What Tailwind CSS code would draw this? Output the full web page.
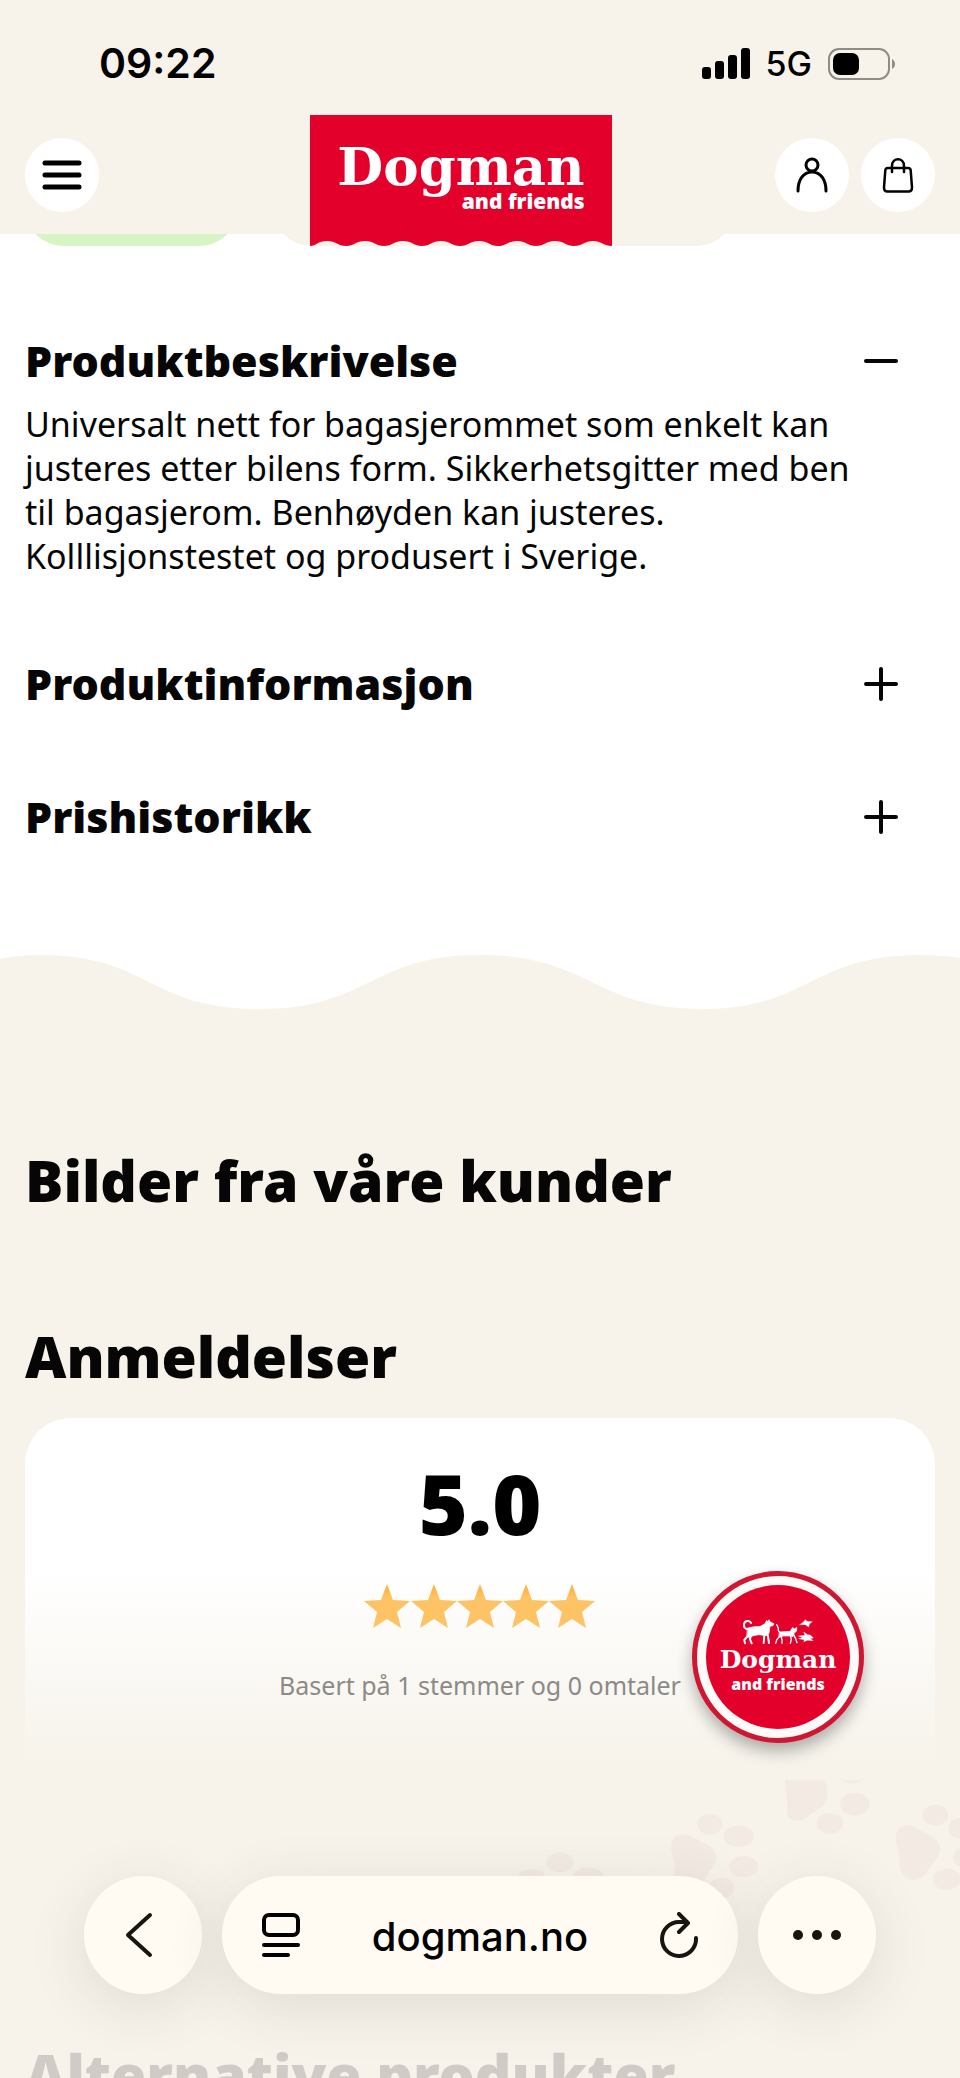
<!DOCTYPE html>
<html lang="no">
<head>
    <meta charset="UTF-8">
    <meta name="viewport" content="width=device-width, initial-scale=1.0">
    <title>Dogman and friends</title>
    <script src="https://cdn.jsdelivr.net/npm/@tailwindcss/browser@4"></script>
</head>
<body class="bg-[#f7f3eb] text-[#060606] font-['Noto_Sans',sans-serif]">
    <div class="relative h-screen overflow-hidden">

        <!-- Header -->
        <header class="relative z-10 h-[234px] bg-[#f7f3eb]">
            <div class="flex items-center justify-between h-[115px] pl-[99px] pr-16 pt-3 font-['Inter',sans-serif] text-black">
                <span class="text-[41px] leading-none font-semibold">09:22</span>
                <div class="flex items-center gap-4">
                    <svg class="w-12 h-8" viewBox="0 0 48 32" aria-hidden="true">
                        <rect x="0" y="19" width="9" height="12" rx="3"/>
                        <rect x="13" y="13" width="9" height="18" rx="3"/>
                        <rect x="26" y="7" width="9" height="24" rx="3"/>
                        <rect x="39" y="0" width="9" height="31" rx="3"/>
                    </svg>
                    <span class="text-[34px] leading-none font-medium">5G</span>
                    <svg class="w-[68px] h-8" viewBox="0 0 68 32" aria-hidden="true">
                        <rect x="1" y="1" width="60" height="30" rx="10" fill="none" stroke="#8f8c88" stroke-width="2"/>
                        <rect x="5" y="5" width="26" height="22" rx="7"/>
                        <path d="M64 11c4 2 4 8 0 10z" fill="#8f8c88"/>
                    </svg>
                </div>
            </div>
            <nav class="flex items-start justify-between px-[25px]">
                <div class="w-[122px] pt-[23px]">
                    <button type="button" aria-label="Meny" class="flex items-center justify-center size-[74px] rounded-full bg-white">
                        <svg class="w-10 h-8" viewBox="0 0 40 32" fill="none" stroke="#000" stroke-width="5" stroke-linecap="round">
                            <path d="M3 4h34M3 16h34M3 28h34"/>
                        </svg>
                    </button>
                </div>
                <a href="#" class="relative flex flex-col items-center w-[302px] h-[131px] text-white">
                    <svg class="absolute inset-0 size-full" viewBox="0 0 302 131" aria-hidden="true">
                        <path d="M0 0H302V131C294 131 291 126 283 126S272 131 264 131S254 126 245 126S234 131 226 131S216 126 207 126S196 131 188 131S178 126 169 126S158 131 150 131S140 126 131 126S120 131 112 131S102 126 93 126S82 131 74 131S64 126 55 126S44 131 36 131S26 126 17 126S6 131 0 131Z" fill="#e3002b"/>
                    </svg>
                    <span class="relative flex flex-col items-end pt-[27px]">
                        <span class="text-[53px] leading-[48px] font-bold font-['DejaVu_Serif',serif]">Dogman</span>
                        <span class="text-[21px] leading-[22px] font-black">and friends</span>
                    </span>
                </a>
                <div class="flex gap-3 pt-[23px]">
                    <button type="button" aria-label="Min side" class="flex items-center justify-center size-[74px] rounded-full bg-white">
                        <svg class="w-8 h-9" viewBox="0 0 32 36" fill="none" stroke="#000" stroke-width="3" stroke-linecap="round">
                            <circle cx="16" cy="8" r="6"/>
                            <path d="M2 34C2 23 7 15 16 15S30 23 30 34"/>
                        </svg>
                    </button>
                    <button type="button" aria-label="Handlekurv" class="flex items-center justify-center size-[74px] rounded-full bg-white">
                        <svg class="w-8 h-9" viewBox="0 0 32 36" fill="none" stroke="#000" stroke-width="2.500" stroke-linecap="round" stroke-linejoin="round">
                            <path d="M6 11H26Q28.500 11 28.700 13.500L30 30.500Q30 34.500 26.500 34.500H5.500Q2 34.500 2 30.500L3.300 13.500Q3.500 11 6 11Z"/>
                            <path d="M10 15V9C10 0 22 0 22 9V15"/>
                        </svg>
                    </button>
                </div>
            </nav>
        </header>

        <main>
            <!-- Accordion -->
            <section class="bg-white pb-[108px]">
                <div class="flex gap-[35px] px-[25px]">
                    <div class="-mt-16 w-[213px] h-[76px] rounded-full bg-[#d7f5c4]"></div>
                    <div class="-mt-16 w-[462px] h-[76px] rounded-full bg-[#f7f3eb]"></div>
                </div>
                <div class="flex flex-col gap-[73px] px-[25px] pt-[85px]">
                    <details open>
                        <summary class="flex items-center justify-between list-none h-[60px] pr-9">
                            <h2 class="text-[43px] leading-[60px] font-black">Produktbeskrivelse</h2>
                            <svg class="size-9" viewBox="0 0 36 36" fill="none" stroke="#060606" stroke-width="4" stroke-linecap="round"><path d="M3 18h30"/></svg>
                        </summary>
                        <p class="pt-[11px] pb-[3px] pr-20 text-[34px] leading-[44px]">Universalt nett for bagasjerommet som enkelt kan justeres etter bilens form. Sikkerhetsgitter med ben til bagasjerom. Benhøyden kan justeres. Kolllisjonstestet og produsert i Sverige.</p>
                    </details>
                    <details>
                        <summary class="flex items-center justify-between list-none h-[60px] pr-9">
                            <h2 class="text-[43px] leading-[60px] font-black">Produktinformasjon</h2>
                            <svg class="size-9" viewBox="0 0 36 36" fill="none" stroke="#060606" stroke-width="4" stroke-linecap="round"><path d="M3 18h30M18 3v30"/></svg>
                        </summary>
                    </details>
                    <details>
                        <summary class="flex items-center justify-between list-none h-[60px] pr-9">
                            <h2 class="text-[43px] leading-[60px] font-black">Prishistorikk</h2>
                            <svg class="size-9" viewBox="0 0 36 36" fill="none" stroke="#060606" stroke-width="4" stroke-linecap="round"><path d="M3 18h30M18 3v30"/></svg>
                        </summary>
                    </details>
                </div>
            </section>

            <!-- Wave divider -->
            <svg class="block w-full h-[54px]" viewBox="0 0 960 54" preserveAspectRatio="none" aria-hidden="true">
                <path d="M0 0H960V3Q942 0 921 0C810 0 810 54 702 54S590 0 480 0S370 54 259 54S150 0 39 0Q18 0 0 4Z" fill="#fff"/>
            </svg>

            <section class="px-[25px] pt-[131px]">
                <h2 class="text-[57px] leading-[80px] font-black">Bilder fra våre kunder</h2>
                <h2 class="pt-24 text-[57px] leading-[80px] font-black">Anmeldelser</h2>

                <!-- Rating card -->
                <div class="flex flex-col items-center h-[560px] mt-[22px] rounded-[46px] bg-linear-to-b from-white from-[150px] to-[#f7f3eb] to-[345px]">
                    <p class="pt-[30px] text-[84px] leading-[110px] font-black text-black">5.0</p>
                    <svg class="mt-[26px] w-[232px] h-11" viewBox="0 0 232 44" role="img" aria-label="5 av 5 stjerner">
                        <defs>
                            <linearGradient id="gold" x1="0" y1="0" x2="0" y2="1">
                                <stop offset=".15" stop-color="#fdb749"/>
                                <stop offset=".3" stop-color="#fdc364"/>
                            </linearGradient>
                            <path id="star" d="M23 0L29 16L46 17L33 28L37 44L23 35L9 44L13 28L0 17L17 16Z" fill="url(#gold)"/>
                        </defs>
                        <use href="#star"/>
                        <use href="#star" x="47"/>
                        <use href="#star" x="93"/>
                        <use href="#star" x="139"/>
                        <use href="#star" x="185"/>
                    </svg>
                    <p class="pt-10 text-[25px] leading-[34px] text-[#8c8a88]">Basert på 1 stemmer og 0 omtaler</p>
                </div>
                <h2 class="pt-[56px] text-[57px] leading-[80px] font-black text-[#d0cbc7]">Alternative produkter</h2>
            </section>
        </main>

        <!-- Paw prints -->
        <svg class="absolute bottom-[152px] right-0 w-[480px] h-[150px]" viewBox="0 108 1440 450" fill="#f3eae4" aria-hidden="true">
            <path d="M914 121H1035C1055 180 1035 195 1005 215C980 230 970 243 955 243C925 243 918 225 921 200C923 170 918 145 914 121Z"/>
            <ellipse cx="1050" cy="250" rx="40" ry="31"/>
            <ellipse cx="1124" cy="193" rx="44" ry="34"/>
            <path d="M1085 121Q1115 143 1147 121Z"/>
            <path d="M574 310C580 280 615 275 640 293C670 310 700 315 710 350C710 375 690 385 680 410C660 445 640 450 610 450C575 445 582 410 584 380C585 350 570 340 574 310Z"/>
            <ellipse cx="690" cy="253" rx="38" ry="31"/>
            <ellipse cx="776" cy="289" rx="46" ry="32"/>
            <ellipse cx="791" cy="380" rx="44" ry="32"/>
            <ellipse cx="725" cy="444" rx="38" ry="31"/>
            <path d="M1248 285C1255 250 1290 248 1315 268C1345 285 1382 295 1380 330C1378 355 1358 365 1345 390C1325 425 1285 430 1266 400C1255 380 1262 360 1256 335C1252 315 1245 305 1248 285Z"/>
            <ellipse cx="1366" cy="225" rx="39" ry="31"/>
            <ellipse cx="1446" cy="265" rx="42" ry="32"/>
            <ellipse cx="1460" cy="353" rx="40" ry="32"/>
            <ellipse cx="1400" cy="418" rx="42" ry="32"/>
            <ellipse cx="240" cy="367" rx="40" ry="30"/>
            <ellipse cx="155" cy="412" rx="40" ry="26"/>
            <ellipse cx="325" cy="410" rx="44" ry="28"/>
        </svg>

        <!-- Floating badge -->
        <button type="button" aria-label="Dogman and friends" class="absolute right-[96px] bottom-[335px] z-10 flex items-center justify-center size-[172px] rounded-full border-[5px] border-[#cf1733] bg-[#fdfaf8] shadow-[0_8px_16px_rgba(0,0,0,0.3)]">
            <span class="flex flex-col items-center size-[144px] pt-[33px] rounded-full bg-[#e3002b] text-white">
                <svg class="w-[74px] h-[27px] shrink-0" viewBox="0 0 222 81" fill="none" stroke="#fff" stroke-linecap="round" stroke-linejoin="round" aria-hidden="true">
                    <!-- dog -->
                    <path d="M20 34C4 30 6 8 22 9Q29 10 30 15" stroke-width="6"/>
                    <path d="M20 30Q40 25 58 25L72 17L77 7L80 11L84 5L88 12L99 17L96 23L87 25L84 46L75 53L54 50L36 53L30 58H18Z" fill="#fff" stroke-width="2"/>
                    <path d="M20 54L10 66L12 76M29 54L27 64L32 76M70 50L68 75M80 48L84 75" stroke-width="6"/>
                    <!-- cat -->
                    <path d="M118 44Q110 40 112 30L107 20" stroke-width="4"/>
                    <path d="M116 42L148 40L155 28L160 33L167 28V39L159 46L156 56L144 54L128 54L114 57Z" fill="#fff" stroke-width="2"/>
                    <path d="M117 54L108 64L104 76M120 54L123 66V76M148 52L151 64L148 76M158 50L164 62L168 74" stroke-width="4"/>
                    <!-- birds and rodent -->
                    <path d="M176 20L188 11L193 5L198 10L214 11L206 17L203 27L193 20Z" fill="#fff" stroke-width="1"/>
                    <path d="M173 54L192 52L188 42L200 50L208 51L217 60L208 62L217 68L200 67L188 71L190 65L173 62L184 59Z" fill="#fff" stroke-width="1"/>
                </svg>
                <span class="text-[25px] leading-[29px] font-bold font-['DejaVu_Serif',serif]">Dogman</span>
                <span class="text-[16px] leading-5 font-black">and friends</span>
            </span>
        </button>

        <!-- Browser toolbar -->
        <div class="absolute inset-x-0 bottom-[84px] z-10 flex gap-5 px-[84px] text-[#16150f]">
            <button type="button" aria-label="Tilbake" class="flex items-center justify-center size-[118px] pr-2 shrink-0 rounded-full bg-[#fffbf3] shadow-[0_12px_60px_rgba(60,50,40,0.12)]">
                <svg class="w-7 h-12" viewBox="0 0 28 48" fill="none" stroke="currentColor" stroke-width="4" stroke-linecap="round" stroke-linejoin="round"><path d="M25 4L3 24L25 44"/></svg>
            </button>
            <div class="flex items-center justify-between grow h-[118px] px-10 rounded-full bg-[#fffbf3] shadow-[0_12px_60px_rgba(60,50,40,0.12)]">
                <button type="button" aria-label="Sidemeny">
                    <svg class="w-[38px] h-[46px]" viewBox="0 0 38 46" fill="none" stroke="#000" stroke-width="4" stroke-linecap="round"><rect x="2" y="3" width="34" height="20" rx="5"/><path d="M2 33h34M2 43h24"/></svg>
                </button>
                <a href="#" class="font-['Inter',sans-serif] pt-1 text-[40px] leading-none font-medium text-black">dogman.no</a>
                <button type="button" aria-label="Last inn på nytt">
                    <svg class="w-[38px] h-[46px]" viewBox="0 0 38 46" fill="none" stroke="currentColor" stroke-width="4" stroke-linecap="round" stroke-linejoin="round"><path d="M36 26A17 17 0 1 1 19 10H27M19 2L28 11L19 20"/></svg>
                </button>
            </div>
            <button type="button" aria-label="Mer" class="flex items-center justify-center size-[118px] shrink-0 rounded-full bg-[#fffbf3] shadow-[0_12px_60px_rgba(60,50,40,0.12)]">
                <svg class="w-12 h-3" viewBox="0 0 48 12" fill="currentColor"><circle cx="5" cy="6" r="5"/><circle cx="24" cy="6" r="5"/><circle cx="43" cy="6" r="5"/></svg>
            </button>
        </div>
    </div>
</body>
</html>
